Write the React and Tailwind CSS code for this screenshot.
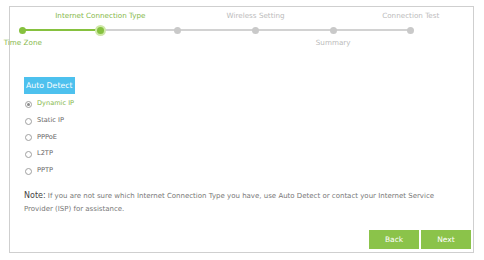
import React from "react";

const steps = [
  { label: "Time Zone", pos: "bottom", state: "done" },
  { label: "Internet Connection Type", pos: "top", state: "active" },
  { label: "", pos: "none", state: "todo" },
  { label: "Wireless Setting", pos: "top", state: "todo" },
  { label: "Summary", pos: "bottom", state: "todo" },
  { label: "Connection Test", pos: "top", state: "todo" },
];

const types = ["Dynamic IP", "Static IP", "PPPoE", "L2TP", "PPTP"];

const Dot = ({ state }) => {
  if (state === "active") {
    return (
      <div className="w-[11px] h-[11px] rounded-full bg-[#cfe8a8] flex items-center justify-center">
        <div className="w-[7px] h-[7px] rounded-full bg-[#86c13f]" />
      </div>
    );
  }
  return (
    <div
      className={`w-[7px] h-[7px] rounded-full ${
        state === "done" ? "bg-[#86c13f]" : "bg-[#c9c9c9]"
      }`}
    />
  );
};

const Stepper = () => (
  <div className="relative flex -ml-[26px] mt-[2px]">
    <div className="absolute top-[20px] left-[39px] w-[78px] h-[2px] bg-[#86c13f]" />
    <div className="absolute top-[20px] left-[117px] w-[310px] h-[2px] bg-[#d2d2d2]" />
    {steps.map((s, i) => (
      <div key={i} className="w-[77.6px] flex flex-col items-center shrink-0">
        <div
          className={`h-[14px] text-[7.2px] leading-[14px] whitespace-nowrap ${
            s.state === "todo" ? "text-[#bbbbbb]" : "text-[#86b84a]"
          }`}
        >
          {s.pos === "top" ? s.label : ""}
        </div>
        <div className="relative h-[14px] flex items-center justify-center">
          <Dot state={s.state} />
        </div>
        <div
          className={`h-[12px] text-[7.2px] leading-[12px] whitespace-nowrap ${
            s.state === "todo" ? "text-[#bbbbbb]" : "text-[#86b84a]"
          }`}
        >
          {s.pos === "bottom" ? s.label : ""}
        </div>
      </div>
    ))}
  </div>
);

const App = () => {
  return (
    <div
      className="w-[484px] h-[260px] bg-white pt-[6px] pl-[9px] overflow-hidden"
      style={{ fontFamily: '"DejaVu Sans", Verdana, sans-serif' }}
    >
      <div className="w-[465px] h-[247px] border border-[#cfcfcf] flex flex-col">
        <Stepper />

        <div className="pl-[14px] mt-[22px]">
          <button className="h-[17px] px-[2px] bg-[#4dc1ee] text-white text-[7.8px] leading-[17px]">
            Auto Detect
          </button>

          <ul className="mt-[1px]">
            {types.map((t, i) => (
              <li key={t} className="flex items-center h-[16.7px] pl-[1px]">
                <span className="w-[7px] h-[7px] rounded-full border border-[#a0a0a0] flex items-center justify-center">
                  {i === 0 && <span className="w-[3px] h-[3px] rounded-full bg-[#8a8a8a]" />}
                </span>
                <span
                  className={`ml-[5px] text-[6.6px] ${
                    i === 0 ? "text-[#86b84a]" : "text-[#666]"
                  }`}
                >
                  {t}
                </span>
              </li>
            ))}
          </ul>

          <p className="mt-[11px] w-[420px] text-[7px] leading-[13px] text-[#777]">
            <span className="text-[8px] leading-none text-[#444]">Note:</span> If you are not
            sure which Internet Connection Type you have, use Auto Detect or contact your Internet
            Service Provider (ISP) for assistance.
          </p>
        </div>

        <div className="mt-auto flex justify-end gap-[2px] pr-[2px] pb-[3px]">
          <button className="w-[50px] h-[19px] bg-[#8bc34a] text-white text-[7.5px]">Back</button>
          <button className="w-[50px] h-[19px] bg-[#8bc34a] text-white text-[7.5px]">Next</button>
        </div>
      </div>
    </div>
  );
};

export default App;
